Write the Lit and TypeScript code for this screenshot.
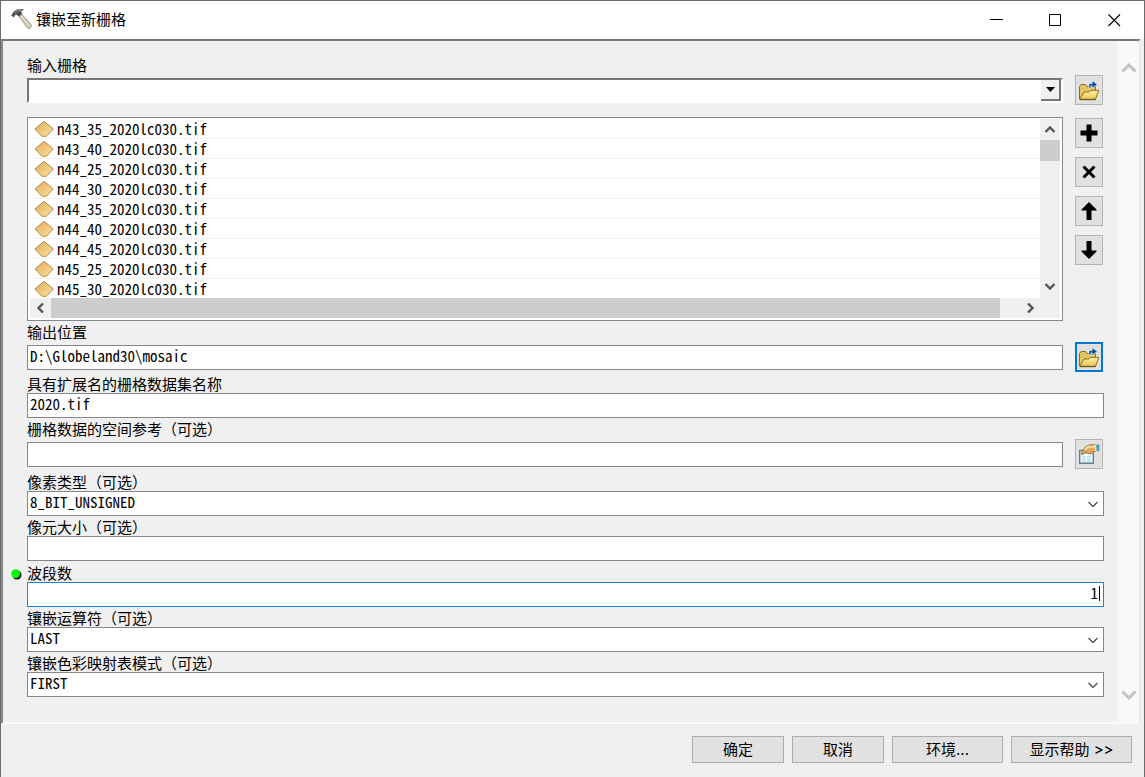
import { LitElement, html, svg, css, nothing } from "lit";
import { customElement, property } from "lit/decorators.js";
import { classMap } from "lit/directives/class-map.js";

const FILES = ["n43_35", "n43_40", "n44_25", "n44_30", "n44_35", "n44_40", "n44_45", "n45_25", "n45_30"].map(
  (tile) => `${tile}_2020lc030.tif`,
);

const chevrons: Record<string, string> = {
  up: "M1.5 7 L6 2.5 L10.5 7",
  down: "M1.5 3 L6 7.5 L10.5 3",
  left: "M8 0.5 L3.5 5 L8 9.5",
  right: "M4 0.5 L8.5 5 L4 9.5",
};

const chevron = (dir: string, width = 2.4) => html`
  <svg width="12" height="10" viewBox="0 0 12 10" fill="none" stroke="currentColor" stroke-width=${width}>
    <path d=${chevrons[dir]} />
  </svg>
`;

const folderIcon = html`
  <svg width="22" height="22" viewBox="0 0 22 22">
    <defs>
      <linearGradient id="ff" x1="0" y1="0" x2="0" y2="1">
        <stop offset="0" stop-color="#fdf3a6" />
        <stop offset="1" stop-color="#e9c350" />
      </linearGradient>
    </defs>
    <path d="M1.5 20 V7.5 L3 5.5 H7.5 L9 7.5 H17.5 V20 Z" fill="#e3c460" stroke="#8d6f1f" />
    <path d="M1.8 20.3 L6 13 H11 L12.5 11.3 H20.8 L17.5 20.3 Z" fill="url(#ff)" stroke="#8d6f1f" />
    <path d="M2 20.7 H17.6" stroke="#6b521a" stroke-width="1" />
    <path d="M11 9 V4.6 H14.2 V1.6 L19.3 5.4 L14.2 9.2 V6.8 H13 V9 Z" fill="#104f94" stroke="#e8f2fb" stroke-width=".6" />
  </svg>
`;

const handIcon = html`
  <svg width="22" height="22" viewBox="0 0 22 22">
    <path d="M1.7 7.5 H15.3 V20.3 H1.7 Z" fill="#f6fbfd" stroke="#5c7f92" stroke-width="1.4" />
    <path d="M2.5 8.2 H14.5 V11 H2.5 Z" fill="#a9cfdf" />
    <path d="M4 13.5 H7.5 M9 13.5 H13 M4 15.8 H7.5 M9 15.8 H13 M4 18 H7.5 M9 18 H13" stroke="#b4d8e6" stroke-width="1.3" />
    <path d="M3.2 10.8 L5 7.5 L7.5 3.8 L11 1.8 H17.5 L18 8 L15.5 9 L13 11 L10.5 10.6 L8 9.2 L5.5 11 L4 11.8 Z" fill="#dca75c" stroke="#98682d" stroke-width=".8" />
    <path d="M7 6.8 L10 3.8 H16.5" stroke="#f8dda6" stroke-width="2" fill="none" />
    <path d="M17.8 1.8 L21.4 1.4 V8.3 L18.3 8 Z" fill="#4f9bb5" />
    <path d="M16.4 2 H18.2 L18.6 8 H16.8 Z" fill="#f1e3bd" />
  </svg>
`;

const plusIcon = html`
  <svg width="18" height="18" viewBox="0 0 18 18"><path d="M6.5 0.5 H11.5 V6.5 H17.5 V11.5 H11.5 V17.5 H6.5 V11.5 H0.5 V6.5 H6.5 Z" /></svg>
`;
const crossIcon = html`
  <svg width="18" height="18" viewBox="0 0 18 18"><path d="M3.5 3.5 L14.5 14.5 M14.5 3.5 L3.5 14.5" stroke="#000" stroke-width="3" /></svg>
`;
const upIcon = html`
  <svg width="18" height="18" viewBox="0 0 18 18"><path d="M9 0 L16.5 7.5 V8.5 H11.5 V18 H6.5 V8.5 H1.5 V7.5 Z" /></svg>
`;
const downIcon = html`
  <svg width="18" height="18" viewBox="0 0 18 18"><path d="M9 18 L16.5 10.5 V9.5 H11.5 V0 H6.5 V9.5 H1.5 V10.5 Z" /></svg>
`;

const hammerIcon = html`
  <svg width="22" height="22" viewBox="0 0 22 22">
    <path d="M7.5 6.5 L10 4.5 L20 15.5 L20.2 18 L18.3 19.6 L16.2 18.6 Z" fill="#cdc4b0" stroke="#8a8272" stroke-width=".7" />
    <path d="M9.5 6.5 L18.6 17.3" stroke="#ebe5d6" stroke-width="1.2" />
    <path d="M0.6 6.5 L3 2.6 L6.5 0.8 L12.5 0.5 L9.5 2.4 L11 4.6 L8 7.3 L5.8 5.6 L3.6 5.8 L2.8 8 Z" fill="#4b4f50" stroke="#2e3132" stroke-width=".5" />
    <path d="M3.4 4 L6.5 2 L10 1.5" stroke="#a5abab" stroke-width=".9" fill="none" />
  </svg>
`;

const layerIcon = svg`
  <svg width="20" height="17" viewBox="0 0 20 17" aria-hidden="true">
    <defs>
      <linearGradient id="lg" x1="0" y1="0" x2="1" y2="1">
        <stop offset="0" stop-color="#e3a955" />
        <stop offset="1" stop-color="#fde3a6" />
      </linearGradient>
    </defs>
    <path d="M10 1.3 L19.3 9 L12.4 16.3 H8 L1 9 Z" fill="url(#lg)" stroke="#b98945" stroke-width="1" stroke-linejoin="round" />
  </svg>
`;

const controls = css`
  * {
    box-sizing: border-box;
  }
  button,
  input,
  select {
    margin: 0;
    padding: 0;
    border-radius: 0;
    color: #000;
    outline: none;
  }
  svg {
    display: block;
    flex: none;
  }
`;

@customElement("tool-button")
class ToolButton extends LitElement {
  @property() label = "";
  @property({ attribute: false }) icon: unknown = nothing;
  @property({ type: Boolean }) active = false;

  static styles = [
    controls,
    css`
      :host {
        display: block;
        flex: none;
      }
      .tool {
        display: grid;
        place-items: center;
        width: 28px;
        height: 30px;
        border: 1px solid #b4b4b4;
        background: #e1e1e1;
      }
      .active {
        border: 2px solid #0078d7;
      }
    `,
  ];

  render() {
    return html`<button class=${classMap({ tool: true, active: this.active })} aria-label=${this.label}>${this.icon}</button>`;
  }
}

@customElement("form-field")
class FormField extends LitElement {
  @property() label = "";
  @property() value = "";
  @property() kind: "text" | "select" | "number" | "combo" = "text";
  @property({ attribute: false }) icon: unknown = null;
  @property({ type: Boolean }) active = false;
  @property() hint = "";

  static styles = [
    controls,
    css`
      :host {
        display: block;
      }
      .label {
        position: relative;
        display: block;
        width: max-content;
        font: 15px/18px "Noto Sans CJK SC", sans-serif;
      }
      .dot {
        position: absolute;
        left: -16px;
        top: 5px;
      }
      .row {
        display: flex;
        align-items: center;
        gap: 12px;
      }
      .with-tool {
        padding: 1px 1px 1px 0;
      }
      .box {
        flex: 1;
        min-width: 0;
        display: grid;
        align-items: center;
        position: relative;
      }
      .control {
        grid-area: 1 / 1;
        width: 100%;
        height: 25px;
        padding: 0 2px 4px;
        border: 1px solid #868686;
        background: #fff;
        appearance: none;
        font: 15px/19px "Noto Sans Mono CJK SC", "Liberation Mono", monospace;
      }
      .number {
        border-color: #1a84d8;
        text-align: right;
        padding-right: 5px;
      }
      .caret {
        position: absolute;
        right: 4px;
        top: 4px;
        width: 1px;
        height: 15px;
        background: #000;
      }
      .combo {
        border: 2px solid;
        border-color: #767676 #fff #fff #767676;
      }
      .arrow {
        grid-area: 1 / 1;
        justify-self: end;
        margin-right: 5px;
        color: #5a5a5a;
        pointer-events: none;
      }
      .drop {
        grid-area: 1 / 1;
        justify-self: end;
        display: grid;
        place-items: center;
        width: 20px;
        height: 21px;
        margin-right: 2px;
        border: solid #767676;
        border-width: 0 2px 2px 0;
        background: #f0f0f0;
        pointer-events: none;
      }
    `,
  ];

  private control() {
    if (this.kind === "select" || this.kind === "combo") {
      const combo = this.kind === "combo";
      return html`
        <select id="control" class=${classMap({ control: true, combo })}>
          <option>${this.value}</option>
        </select>
        ${combo
          ? html`<span class="drop"><svg width="9" height="5" viewBox="0 0 9 5"><path d="M0 0 H9 L4.5 5 Z" /></svg></span>`
          : html`<span class="arrow">${chevron("down", 1.5)}</span>`}
      `;
    }
    const number = this.kind === "number";
    return html`
      <input id="control" class=${classMap({ control: true, number })} .value=${this.value} />
      ${number ? html`<span class="caret"></span>` : nothing}
    `;
  }

  render() {
    return html`
      <label class="label" for="control">
        ${this.kind === "number"
          ? html`<svg class="dot" width="11" height="11" viewBox="0 0 11 11">
              <circle cx="6" cy="6" r="4.5" fill="#111" />
              <circle cx="4.6" cy="4.6" r="4.4" fill="#0f0" />
            </svg>`
          : nothing}${this.label}
      </label>
      <div class=${classMap({ row: true, "with-tool": !!this.icon })}>
        <div class="box">${this.control()}</div>
        ${this.icon ? html`<tool-button .icon=${this.icon} .label=${this.hint} ?active=${this.active}></tool-button>` : nothing}
      </div>
    `;
  }
}

@customElement("raster-list")
class RasterList extends LitElement {
  static styles = [
    controls,
    css`
      :host {
        display: grid;
        grid-template: 1fr 20px / 1fr 20px;
        height: 204px;
        padding: 1px 2px 2px;
        border: 1px solid #828790;
        background: #fff;
      }
      .items {
        margin: 0;
        padding: 0;
        list-style: none;
        overflow: hidden;
        height: 179px;
      }
      .item {
        display: flex;
        align-items: center;
        gap: 3px;
        height: 20px;
        padding-left: 4px;
        border-bottom: 1px solid #f0f0f0;
        font: 15px/18px "Noto Sans Mono CJK SC", "Liberation Mono", monospace;
      }
      .item:last-child {
        border-bottom-color: #fff;
      }
      .bar {
        display: flex;
        background: #f0f0f0;
      }
      .vertical {
        flex-direction: column;
        padding-bottom: 2px;
      }
      .horizontal {
        grid-column: 1 / -1;
        padding-right: 20px;
      }
      .step {
        display: grid;
        place-items: center;
        flex: none;
        width: 21px;
        height: 21px;
        border: 0;
        background: none;
        color: #555;
      }
      .vertical .step {
        width: 20px;
      }
      .horizontal .step {
        height: 20px;
      }
      .track {
        flex: 1;
      }
      .thumb {
        background: #cdcdcd;
      }
      .vertical .thumb {
        height: 21px;
      }
      .horizontal .thumb {
        width: 98%;
        height: 20px;
      }
    `,
  ];

  render() {
    return html`
      <ul class="items">
        ${FILES.map((file) => html`<li class="item">${layerIcon}<span>${file}</span></li>`)}
      </ul>
      <div class="bar vertical">
        <button class="step" aria-label="向上滚动">${chevron("up")}</button>
        <div class="track"><div class="thumb"></div></div>
        <button class="step" aria-label="向下滚动">${chevron("down")}</button>
      </div>
      <div class="bar horizontal">
        <button class="step" aria-label="向左滚动">${chevron("left")}</button>
        <div class="track"><div class="thumb"></div></div>
        <button class="step" aria-label="向右滚动">${chevron("right")}</button>
      </div>
    `;
  }
}

@customElement("app-root")
class AppRoot extends LitElement {
  static styles = [
    controls,
    css`
      :host {
        display: flex;
        flex-direction: column;
        min-height: 100vh;
        box-sizing: border-box;
        border: 1px solid #6b6b6b;
        border-bottom: 0;
        background: #f0f0f0;
        color: #000;
        font: 15px/20px "Noto Sans CJK SC", sans-serif;
      }
      .titlebar {
        display: flex;
        align-items: center;
        height: 38px;
        padding-left: 10px;
        background: #fff;
      }
      .title {
        flex: 1;
        margin: 0 0 2px 3px;
        font-size: 15px;
        font-weight: 400;
      }
      .caption {
        display: grid;
        place-items: center;
        width: 59px;
        height: 38px;
        border: 0;
        background: none;
      }
      .panel {
        flex: 1;
        display: flex;
        margin-right: 4px;
        border: 2px solid;
        border-color: #767676 #e3e3e3 #fafafa #8a8a8a;
        border-right-width: 1px;
      }
      .form {
        flex: 1;
        min-width: 0;
        display: flex;
        flex-direction: column;
        gap: 2px;
        padding: 15px 14px 24px 24px;
      }
      .spaced {
        margin-bottom: 1px;
      }
      .rasters {
        display: flex;
        gap: 12px;
        margin-top: 9px;
        padding-right: 1px;
      }
      .list {
        flex: 1;
        min-width: 0;
      }
      .tools {
        display: flex;
        flex-direction: column;
        gap: 9px;
        padding-top: 1px;
      }
      .scroll {
        display: flex;
        flex-direction: column;
        justify-content: space-between;
        width: 21px;
        padding: 17px 0;
        background: #f9f9f9;
      }
      .scroll-step {
        display: grid;
        place-items: center;
        height: 20px;
        border: 0;
        background: none;
        color: #c2c2c2;
      }
      .footer {
        display: flex;
        justify-content: flex-end;
        gap: 8px;
        padding: 12px 12px 14px;
      }
      .action {
        width: 92px;
        height: 27px;
        border: 1px solid #adadad;
        background: #e1e1e1;
        font: 15px/20px Inter, "Noto Sans CJK SC", sans-serif;
      }
      .wide {
        width: 111px;
      }
      .widest {
        width: 121px;
      }
    `,
  ];

  render() {
    return html`
      <header class="titlebar">
        ${hammerIcon}
        <h1 class="title">镶嵌至新栅格</h1>
        <button class="caption" aria-label="最小化">
          <svg width="13" height="13" viewBox="0 0 13 13"><path d="M0 5.5 H13" stroke="#000" /></svg>
        </button>
        <button class="caption" aria-label="最大化">
          <svg width="13" height="13" viewBox="0 0 13 13"><path d="M0.5 0.5 H11.5 V11.5 H0.5 Z" fill="none" stroke="#000" /></svg>
        </button>
        <button class="caption" aria-label="关闭">
          <svg width="13" height="13" viewBox="0 0 13 13"><path d="M0.5 0.5 L12 12 M12 0.5 L0.5 12" stroke="#000" stroke-width="1.1" /></svg>
        </button>
      </header>
      <main class="panel">
        <div class="form">
          <form-field label="输入栅格" kind="combo" .icon=${folderIcon} hint="浏览"></form-field>
          <div class="rasters">
            <raster-list class="list"></raster-list>
            <div class="tools">
              <tool-button label="添加" .icon=${plusIcon}></tool-button>
              <tool-button label="移除" .icon=${crossIcon}></tool-button>
              <tool-button label="上移" .icon=${upIcon}></tool-button>
              <tool-button label="下移" .icon=${downIcon}></tool-button>
            </div>
          </div>
          <form-field label="输出位置" value="D:\\Globeland30\\mosaic" .icon=${folderIcon} hint="浏览" active></form-field>
          <form-field label="具有扩展名的栅格数据集名称" value="2020.tif"></form-field>
          <form-field class="spaced" label="栅格数据的空间参考（可选）" .icon=${handIcon} hint="属性"></form-field>
          <form-field label="像素类型（可选）" kind="select" value="8_BIT_UNSIGNED"></form-field>
          <form-field class="spaced" label="像元大小（可选）"></form-field>
          <form-field label="波段数" kind="number" value="1"></form-field>
          <form-field label="镶嵌运算符（可选）" kind="select" value="LAST"></form-field>
          <form-field label="镶嵌色彩映射表模式（可选）" kind="select" value="FIRST"></form-field>
        </div>
        <div class="scroll">
          <button class="scroll-step" aria-label="向上滚动">
            <svg width="16" height="12" viewBox="0 0 16 12" fill="none" stroke="currentColor" stroke-width="3"><path d="M1.5 9.5 L8 3 L14.5 9.5" /></svg>
          </button>
          <button class="scroll-step" aria-label="向下滚动">
            <svg width="16" height="12" viewBox="0 0 16 12" fill="none" stroke="currentColor" stroke-width="3"><path d="M1.5 2.5 L8 9 L14.5 2.5" /></svg>
          </button>
        </div>
      </main>
      <footer class="footer">
        <button class="action">确定</button>
        <button class="action">取消</button>
        <button class="action wide">环境...</button>
        <button class="action widest">显示帮助 &gt;&gt;</button>
      </footer>
    `;
  }
}
